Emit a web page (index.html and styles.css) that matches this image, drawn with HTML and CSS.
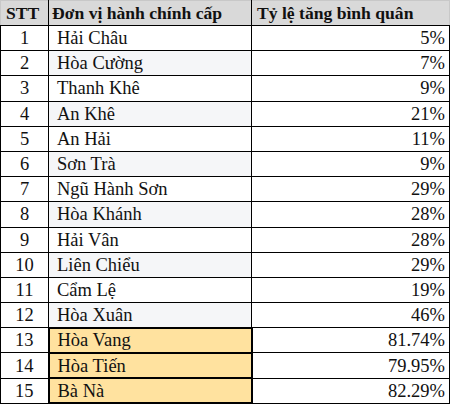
FILE: index.html
```html
<!DOCTYPE html>
<html lang="vi">
<head>
<meta charset="utf-8">
<link rel="stylesheet" href="styles.css">
</head>
<body>
<table class="sheet">
  <colgroup>
    <col class="w-stt">
    <col class="w-name">
    <col class="w-rate">
  </colgroup>
  <thead>
    <tr class="head">
      <th class="c-stt">STT</th>
      <th class="c-name">Đơn vị hành chính cấp</th>
      <th class="c-rate">Tỷ lệ tăng bình quân</th>
    </tr>
  </thead>
  <tbody>
    <tr><td class="c-stt">1</td><td class="c-name">Hải Châu</td><td class="c-rate">5%</td></tr>
    <tr class="alt"><td class="c-stt">2</td><td class="c-name">Hòa Cường</td><td class="c-rate">7%</td></tr>
    <tr><td class="c-stt">3</td><td class="c-name">Thanh Khê</td><td class="c-rate">9%</td></tr>
    <tr class="alt"><td class="c-stt">4</td><td class="c-name">An Khê</td><td class="c-rate">21%</td></tr>
    <tr><td class="c-stt">5</td><td class="c-name">An Hải</td><td class="c-rate">11%</td></tr>
    <tr class="alt"><td class="c-stt">6</td><td class="c-name">Sơn Trà</td><td class="c-rate">9%</td></tr>
    <tr><td class="c-stt">7</td><td class="c-name">Ngũ Hành Sơn</td><td class="c-rate">29%</td></tr>
    <tr class="alt"><td class="c-stt">8</td><td class="c-name">Hòa Khánh</td><td class="c-rate">28%</td></tr>
    <tr><td class="c-stt">9</td><td class="c-name">Hải Vân</td><td class="c-rate">28%</td></tr>
    <tr class="alt"><td class="c-stt">10</td><td class="c-name">Liên Chiểu</td><td class="c-rate">29%</td></tr>
    <tr><td class="c-stt">11</td><td class="c-name">Cẩm Lệ</td><td class="c-rate">19%</td></tr>
    <tr class="alt"><td class="c-stt">12</td><td class="c-name">Hòa Xuân</td><td class="c-rate">46%</td></tr>
    <tr class="hl"><td class="c-stt">13</td><td class="c-name">Hòa Vang</td><td class="c-rate">81.74%</td></tr>
    <tr class="hl"><td class="c-stt">14</td><td class="c-name">Hòa Tiến</td><td class="c-rate">79.95%</td></tr>
    <tr class="hl"><td class="c-stt">15</td><td class="c-name">Bà Nà</td><td class="c-rate">82.29%</td></tr>
  </tbody>
</table>
</body>
</html>
```
FILE: styles.css
```css
html, body {
  margin: 0;
  padding: 0;
  background: #ffffff;
}

.sheet {
  border-collapse: collapse;
  width: 449px;
  table-layout: fixed;
  color: #111111;
}

.w-stt { width: 48px; }
.w-name { width: 203px; }
.w-rate { width: 198px; }

.sheet th,
.sheet td {
  border: 1px solid #000000;
  padding: 0;
  line-height: 20px;
  white-space: nowrap;
  overflow: hidden;
  font-family: "Liberation Serif", "Times New Roman", serif;
  font-size: 18.5px;
  font-weight: normal;
}

.head {
  height: 25px;
}

.sheet tbody tr {
  height: 25.2px;
}

.sheet .head th {
  background: #d9d9d9;
  font-weight: bold;
  font-size: 17.6px;
  border-top: 1px solid #c8c8c8;
  text-align: left;
}

.sheet .head th:first-child {
  border-left: 1px solid #c8c8c8;
}

.sheet .head th:last-child {
  border-right: 1px solid #c8c8c8;
}

.sheet .c-stt {
  text-align: center;
}

.sheet .head .c-stt {
  text-align: left;
  padding-left: 5px;
}

.sheet .c-name {
  padding-left: 8px;
}

.sheet .head .c-name {
  padding-left: 3px;
}

.sheet .c-rate {
  text-align: right;
  padding-right: 4px;
}

.sheet .head .c-rate {
  text-align: left;
  padding-left: 5px;
}

.alt .c-name {
  background: #f5f6f8;
}

.hl .c-name {
  background: #ffe29f;
  border: 2px solid #000000;
}
```
